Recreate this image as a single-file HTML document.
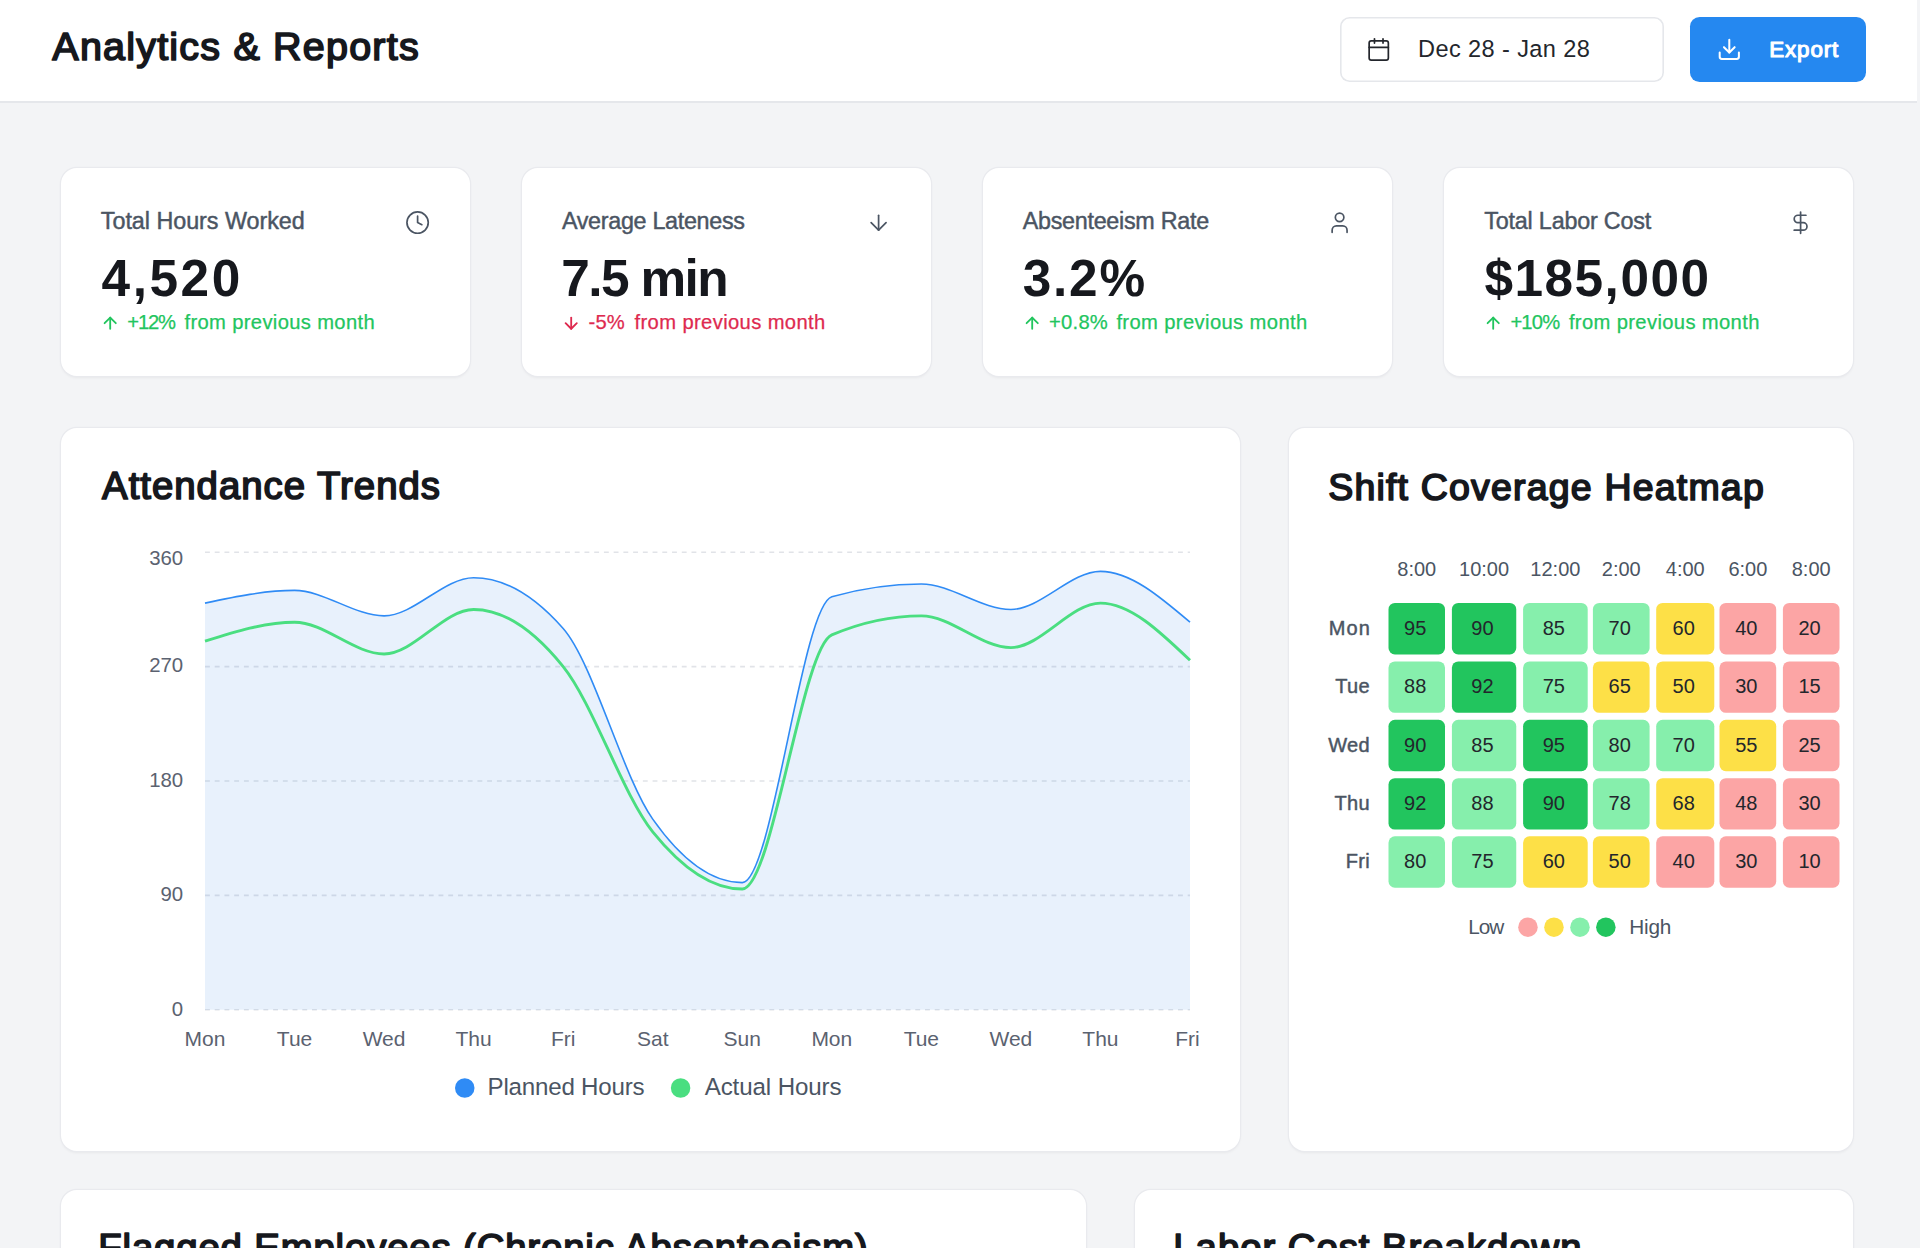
<!DOCTYPE html>
<html><head><meta charset="utf-8"><title>Analytics &amp; Reports</title>
<style>
html,body{margin:0;padding:0;}
body{width:1920px;height:1248px;overflow:hidden;background:#f3f4f6;position:relative;font-family:"Liberation Sans",sans-serif;}
.hdr{position:absolute;left:0;top:0;width:1917.4px;height:101.4px;background:#fff;}
.hdrb{position:absolute;left:0;top:101.4px;width:1917.4px;height:1.6px;background:#e5e7eb;}
.card{position:absolute;background:#fff;border-radius:16px;box-shadow:0 0 0 1.2px #e9eaee,0 1.6px 3px rgba(0,0,0,0.05);}
.btn{position:absolute;border-radius:9.6px;}
svg.ov{position:absolute;left:0;top:0;}
svg text{font-family:"Liberation Sans",sans-serif;}
</style></head><body>
<div class="hdr"></div><div class="hdrb"></div>
<div class="btn" style="left:1340.2px;top:17px;width:324.2px;height:64.6px;background:#fff;box-shadow:inset 0 0 0 1.6px #e5e7eb;"></div>
<div class="btn" style="left:1690.3px;top:16.6px;width:175.6px;height:65px;background:#2588f0;"></div>
<div class="card" style="left:60.6px;top:167.5px;width:409.8px;height:208.4px"></div><div class="card" style="left:521.6px;top:167.5px;width:409.8px;height:208.4px"></div><div class="card" style="left:982.6px;top:167.5px;width:409.8px;height:208.4px"></div><div class="card" style="left:1443.6px;top:167.5px;width:409.8px;height:208.4px"></div><div class="card" style="left:60.6px;top:427.5px;width:1179px;height:723.8px"></div><div class="card" style="left:1289px;top:427.5px;width:564.4px;height:723.8px"></div><div class="card" style="left:60.6px;top:1189.5px;width:1025px;height:200px"></div><div class="card" style="left:1135px;top:1189.5px;width:718.4px;height:200px"></div>
<svg class="ov" width="1920" height="1248" viewBox="0 0 1920 1248">
<line x1="205.0" y1="1009.70" x2="1190.0" y2="1009.70" stroke="#e1e3e8" stroke-width="1.62" stroke-dasharray="4.865 4.865"/>
<line x1="205.0" y1="895.35" x2="1190.0" y2="895.35" stroke="#e1e3e8" stroke-width="1.62" stroke-dasharray="4.865 4.865"/>
<line x1="205.0" y1="781.00" x2="1190.0" y2="781.00" stroke="#e1e3e8" stroke-width="1.62" stroke-dasharray="4.865 4.865"/>
<line x1="205.0" y1="666.65" x2="1190.0" y2="666.65" stroke="#e1e3e8" stroke-width="1.62" stroke-dasharray="4.865 4.865"/>
<line x1="205.0" y1="552.30" x2="1190.0" y2="552.30" stroke="#e1e3e8" stroke-width="1.62" stroke-dasharray="4.865 4.865"/>
<path d="M205.00,603.12C234.85,596.77,264.70,590.42,294.55,590.42C324.39,590.42,354.24,615.83,384.09,615.83C413.94,615.83,443.79,577.71,473.64,577.71C503.48,577.71,533.33,594.65,563.18,628.53C593.03,662.41,622.88,776.76,652.73,819.12C682.58,861.47,712.42,882.64,742.27,882.64C772.12,882.64,801.97,605.24,831.82,596.77C861.67,588.30,891.52,584.06,921.36,584.06C951.21,584.06,981.06,609.47,1010.91,609.47C1040.76,609.47,1070.61,571.36,1100.45,571.36C1130.30,571.36,1160.15,596.77,1190.00,622.18L1190.00,1009.70L205.00,1009.70Z" fill="#1f77e3" fill-opacity="0.1" stroke="none"/>
<path d="M205.00,603.12C234.85,596.77,264.70,590.42,294.55,590.42C324.39,590.42,354.24,615.83,384.09,615.83C413.94,615.83,443.79,577.71,473.64,577.71C503.48,577.71,533.33,594.65,563.18,628.53C593.03,662.41,622.88,776.76,652.73,819.12C682.58,861.47,712.42,882.64,742.27,882.64C772.12,882.64,801.97,605.24,831.82,596.77C861.67,588.30,891.52,584.06,921.36,584.06C951.21,584.06,981.06,609.47,1010.91,609.47C1040.76,609.47,1070.61,571.36,1100.45,571.36C1130.30,571.36,1160.15,596.77,1190.00,622.18" fill="none" stroke="#2f8bf5" stroke-width="1.6"/>
<path d="M205.00,641.24C234.85,631.71,264.70,622.18,294.55,622.18C324.39,622.18,354.24,653.94,384.09,653.94C413.94,653.94,443.79,609.47,473.64,609.47C503.48,609.47,533.33,629.59,563.18,666.65C593.03,703.71,622.88,794.76,652.73,831.82C682.58,868.88,712.42,889.00,742.27,889.00C772.12,889.00,801.97,647.59,831.82,634.89C861.67,622.18,891.52,615.83,921.36,615.83C951.21,615.83,981.06,647.59,1010.91,647.59C1040.76,647.59,1070.61,603.12,1100.45,603.12C1130.30,603.12,1160.15,631.71,1190.00,660.30" fill="none" stroke="#4ade80" stroke-width="2.9"/>
<circle cx="464.75" cy="1088" r="9.75" fill="#2f8bf5"/>
<circle cx="680.6" cy="1088" r="9.75" fill="#4ade80"/>
<rect x="1388.5" y="603.0" width="56.50" height="51.4" rx="6.4" fill="#22c55e"/>
<rect x="1451.9" y="603.0" width="64.35" height="51.4" rx="6.4" fill="#22c55e"/>
<rect x="1523.1" y="603.0" width="64.60" height="51.4" rx="6.4" fill="#86efac"/>
<rect x="1592.9" y="603.0" width="56.70" height="51.4" rx="6.4" fill="#86efac"/>
<rect x="1656.2" y="603.0" width="58.10" height="51.4" rx="6.4" fill="#fde047"/>
<rect x="1719.5" y="603.0" width="56.70" height="51.4" rx="6.4" fill="#fca5a5"/>
<rect x="1782.9" y="603.0" width="56.60" height="51.4" rx="6.4" fill="#fca5a5"/>
<rect x="1388.5" y="661.4" width="56.50" height="51.4" rx="6.4" fill="#86efac"/>
<rect x="1451.9" y="661.4" width="64.35" height="51.4" rx="6.4" fill="#22c55e"/>
<rect x="1523.1" y="661.4" width="64.60" height="51.4" rx="6.4" fill="#86efac"/>
<rect x="1592.9" y="661.4" width="56.70" height="51.4" rx="6.4" fill="#fde047"/>
<rect x="1656.2" y="661.4" width="58.10" height="51.4" rx="6.4" fill="#fde047"/>
<rect x="1719.5" y="661.4" width="56.70" height="51.4" rx="6.4" fill="#fca5a5"/>
<rect x="1782.9" y="661.4" width="56.60" height="51.4" rx="6.4" fill="#fca5a5"/>
<rect x="1388.5" y="719.8" width="56.50" height="51.4" rx="6.4" fill="#22c55e"/>
<rect x="1451.9" y="719.8" width="64.35" height="51.4" rx="6.4" fill="#86efac"/>
<rect x="1523.1" y="719.8" width="64.60" height="51.4" rx="6.4" fill="#22c55e"/>
<rect x="1592.9" y="719.8" width="56.70" height="51.4" rx="6.4" fill="#86efac"/>
<rect x="1656.2" y="719.8" width="58.10" height="51.4" rx="6.4" fill="#86efac"/>
<rect x="1719.5" y="719.8" width="56.70" height="51.4" rx="6.4" fill="#fde047"/>
<rect x="1782.9" y="719.8" width="56.60" height="51.4" rx="6.4" fill="#fca5a5"/>
<rect x="1388.5" y="778.2" width="56.50" height="51.4" rx="6.4" fill="#22c55e"/>
<rect x="1451.9" y="778.2" width="64.35" height="51.4" rx="6.4" fill="#86efac"/>
<rect x="1523.1" y="778.2" width="64.60" height="51.4" rx="6.4" fill="#22c55e"/>
<rect x="1592.9" y="778.2" width="56.70" height="51.4" rx="6.4" fill="#86efac"/>
<rect x="1656.2" y="778.2" width="58.10" height="51.4" rx="6.4" fill="#fde047"/>
<rect x="1719.5" y="778.2" width="56.70" height="51.4" rx="6.4" fill="#fca5a5"/>
<rect x="1782.9" y="778.2" width="56.60" height="51.4" rx="6.4" fill="#fca5a5"/>
<rect x="1388.5" y="836.3" width="56.50" height="51.4" rx="6.4" fill="#86efac"/>
<rect x="1451.9" y="836.3" width="64.35" height="51.4" rx="6.4" fill="#86efac"/>
<rect x="1523.1" y="836.3" width="64.60" height="51.4" rx="6.4" fill="#fde047"/>
<rect x="1592.9" y="836.3" width="56.70" height="51.4" rx="6.4" fill="#fde047"/>
<rect x="1656.2" y="836.3" width="58.10" height="51.4" rx="6.4" fill="#fca5a5"/>
<rect x="1719.5" y="836.3" width="56.70" height="51.4" rx="6.4" fill="#fca5a5"/>
<rect x="1782.9" y="836.3" width="56.60" height="51.4" rx="6.4" fill="#fca5a5"/>
<circle cx="1527.95" cy="927.15" r="9.75" fill="#fca5a5"/>
<circle cx="1553.95" cy="927.15" r="9.75" fill="#fde047"/>
<circle cx="1579.95" cy="927.15" r="9.75" fill="#86efac"/>
<circle cx="1605.85" cy="927.15" r="9.75" fill="#22c55e"/>
<text x="52.35" y="59.51" font-size="39.53" font-weight="400" fill="#16181d" text-anchor="start" letter-spacing="1.195" stroke="#16181d" stroke-width="1.7" stroke-linejoin="round">Analytics &amp; Reports</text>
<text x="1418.1" y="56.90" font-size="23.55" font-weight="400" fill="#23262c" text-anchor="start" letter-spacing="0.39">Dec 28 - Jan 28</text>
<text x="1769.35" y="56.65" font-size="22.38" font-weight="400" fill="#ffffff" text-anchor="start" letter-spacing="0.83" stroke="#ffffff" stroke-width="1.1" stroke-linejoin="round">Export</text>
<text x="100.82" y="228.78" font-size="23.33" font-weight="400" fill="#4b5563" text-anchor="start" letter-spacing="-0.029" stroke="#4b5563" stroke-width="0.45" stroke-linejoin="round">Total Hours Worked</text>
<text x="561.93" y="228.78" font-size="23.33" font-weight="400" fill="#4b5563" text-anchor="start" letter-spacing="-0.308" stroke="#4b5563" stroke-width="0.45" stroke-linejoin="round">Average Lateness</text>
<text x="1022.73" y="228.78" font-size="23.33" font-weight="400" fill="#4b5563" text-anchor="start" letter-spacing="-0.279" stroke="#4b5563" stroke-width="0.45" stroke-linejoin="round">Absenteeism Rate</text>
<text x="1484.22" y="228.78" font-size="23.33" font-weight="400" fill="#4b5563" text-anchor="start" letter-spacing="-0.189" stroke="#4b5563" stroke-width="0.45" stroke-linejoin="round">Total Labor Cost</text>
<text x="101.5" y="295.60" font-size="51.36" font-weight="700" fill="#16181d" text-anchor="start" letter-spacing="2.572">4,520</text>
<text x="561.3" y="295.60" font-size="51.36" font-weight="700" fill="#16181d" text-anchor="start" letter-spacing="-1.609">7.5 min</text>
<text x="1022.75" y="295.60" font-size="51.36" font-weight="700" fill="#16181d" text-anchor="start" letter-spacing="1.751">3.2%</text>
<text x="1484.4" y="295.60" font-size="51.36" font-weight="700" fill="#16181d" text-anchor="start" letter-spacing="1.493">$185,000</text>
<text x="127.22" y="329.27" font-size="20.2" font-weight="400" fill="#22c55e" text-anchor="start" letter-spacing="-1.115" stroke="#22c55e" stroke-width="0.25" stroke-linejoin="round">+12%</text>
<text x="184.53" y="329.27" font-size="20.2" font-weight="400" fill="#22c55e" text-anchor="start" letter-spacing="0.343" stroke="#22c55e" stroke-width="0.25" stroke-linejoin="round">from previous month</text>
<text x="588.42" y="329.27" font-size="20.2" font-weight="400" fill="#de2a4f" text-anchor="start" letter-spacing="0.25" stroke="#de2a4f" stroke-width="0.25" stroke-linejoin="round">-5%</text>
<text x="634.52" y="329.27" font-size="20.2" font-weight="400" fill="#de2a4f" text-anchor="start" letter-spacing="0.376" stroke="#de2a4f" stroke-width="0.25" stroke-linejoin="round">from previous month</text>
<text x="1049.12" y="329.27" font-size="20.2" font-weight="400" fill="#22c55e" text-anchor="start" letter-spacing="0.224" stroke="#22c55e" stroke-width="0.25" stroke-linejoin="round">+0.8%</text>
<text x="1116.38" y="329.27" font-size="20.2" font-weight="400" fill="#22c55e" text-anchor="start" letter-spacing="0.379" stroke="#22c55e" stroke-width="0.25" stroke-linejoin="round">from previous month</text>
<text x="1510.42" y="329.27" font-size="20.2" font-weight="400" fill="#22c55e" text-anchor="start" letter-spacing="-0.831" stroke="#22c55e" stroke-width="0.25" stroke-linejoin="round">+10%</text>
<text x="1568.88" y="329.27" font-size="20.2" font-weight="400" fill="#22c55e" text-anchor="start" letter-spacing="0.362" stroke="#22c55e" stroke-width="0.25" stroke-linejoin="round">from previous month</text>
<text x="102.05" y="499.25" font-size="38.37" font-weight="400" fill="#16181d" text-anchor="start" letter-spacing="0.999" stroke="#16181d" stroke-width="1.7" stroke-linejoin="round">Attendance Trends</text>
<text x="183.2" y="565.25" font-size="20.4" font-weight="400" fill="#5b6270" text-anchor="end">360</text>
<text x="183.2" y="672.40" font-size="20.4" font-weight="400" fill="#5b6270" text-anchor="end">270</text>
<text x="183.2" y="787.40" font-size="20.4" font-weight="400" fill="#5b6270" text-anchor="end">180</text>
<text x="183.2" y="900.90" font-size="20.4" font-weight="400" fill="#5b6270" text-anchor="end">90</text>
<text x="183.2" y="1016.25" font-size="20.4" font-weight="400" fill="#5b6270" text-anchor="end">0</text>
<text x="205.0" y="1045.60" font-size="21.0" font-weight="400" fill="#5b6270" text-anchor="middle">Mon</text>
<text x="294.54545454545456" y="1045.60" font-size="21.0" font-weight="400" fill="#5b6270" text-anchor="middle">Tue</text>
<text x="384.0909090909091" y="1045.60" font-size="21.0" font-weight="400" fill="#5b6270" text-anchor="middle">Wed</text>
<text x="473.6363636363636" y="1045.60" font-size="21.0" font-weight="400" fill="#5b6270" text-anchor="middle">Thu</text>
<text x="563.1818181818182" y="1045.60" font-size="21.0" font-weight="400" fill="#5b6270" text-anchor="middle">Fri</text>
<text x="652.7272727272727" y="1045.60" font-size="21.0" font-weight="400" fill="#5b6270" text-anchor="middle">Sat</text>
<text x="742.2727272727273" y="1045.60" font-size="21.0" font-weight="400" fill="#5b6270" text-anchor="middle">Sun</text>
<text x="831.8181818181819" y="1045.60" font-size="21.0" font-weight="400" fill="#5b6270" text-anchor="middle">Mon</text>
<text x="921.3636363636364" y="1045.60" font-size="21.0" font-weight="400" fill="#5b6270" text-anchor="middle">Tue</text>
<text x="1010.9090909090909" y="1045.60" font-size="21.0" font-weight="400" fill="#5b6270" text-anchor="middle">Wed</text>
<text x="1100.4545454545455" y="1045.60" font-size="21.0" font-weight="400" fill="#5b6270" text-anchor="middle">Thu</text>
<text x="1187.4" y="1045.60" font-size="21.0" font-weight="400" fill="#5b6270" text-anchor="middle">Fri</text>
<text x="487.6" y="1094.60" font-size="24.13" font-weight="400" fill="#4b5563" text-anchor="start" letter-spacing="-0.219">Planned Hours</text>
<text x="704.7" y="1094.60" font-size="24.13" font-weight="400" fill="#4b5563" text-anchor="start" letter-spacing="-0.113">Actual Hours</text>
<text x="1328.25" y="499.75" font-size="37.5" font-weight="400" fill="#16181d" text-anchor="start" letter-spacing="1.184" stroke="#16181d" stroke-width="1.7" stroke-linejoin="round">Shift Coverage Heatmap</text>
<text x="1416.75" y="576.20" font-size="20.0" font-weight="400" fill="#4b5563" text-anchor="middle">8:00</text>
<text x="1484.075" y="576.20" font-size="20.0" font-weight="400" fill="#4b5563" text-anchor="middle">10:00</text>
<text x="1555.4" y="576.20" font-size="20.0" font-weight="400" fill="#4b5563" text-anchor="middle">12:00</text>
<text x="1621.25" y="576.20" font-size="20.0" font-weight="400" fill="#4b5563" text-anchor="middle">2:00</text>
<text x="1685.25" y="576.20" font-size="20.0" font-weight="400" fill="#4b5563" text-anchor="middle">4:00</text>
<text x="1747.85" y="576.20" font-size="20.0" font-weight="400" fill="#4b5563" text-anchor="middle">6:00</text>
<text x="1811.2" y="576.20" font-size="20.0" font-weight="400" fill="#4b5563" text-anchor="middle">8:00</text>
<text x="1328.72" y="634.77" font-size="19.99" font-weight="400" fill="#4b5563" text-anchor="start" letter-spacing="1.144" stroke="#4b5563" stroke-width="0.45" stroke-linejoin="round">Mon</text>
<text x="1369.9" y="693.17" font-size="20.0" font-weight="400" fill="#4b5563" text-anchor="end" letter-spacing="0.3" stroke="#4b5563" stroke-width="0.45" stroke-linejoin="round">Tue</text>
<text x="1369.9" y="751.57" font-size="20.0" font-weight="400" fill="#4b5563" text-anchor="end" letter-spacing="0.3" stroke="#4b5563" stroke-width="0.45" stroke-linejoin="round">Wed</text>
<text x="1369.9" y="809.98" font-size="20.0" font-weight="400" fill="#4b5563" text-anchor="end" letter-spacing="0.3" stroke="#4b5563" stroke-width="0.45" stroke-linejoin="round">Thu</text>
<text x="1369.9" y="868.07" font-size="20.0" font-weight="400" fill="#4b5563" text-anchor="end" letter-spacing="0.3" stroke="#4b5563" stroke-width="0.45" stroke-linejoin="round">Fri</text>
<text x="1415.15" y="634.80" font-size="20.0" font-weight="400" fill="#23262c" text-anchor="middle">95</text>
<text x="1482.4750000000001" y="634.80" font-size="20.0" font-weight="400" fill="#23262c" text-anchor="middle">90</text>
<text x="1553.8000000000002" y="634.80" font-size="20.0" font-weight="400" fill="#23262c" text-anchor="middle">85</text>
<text x="1619.65" y="634.80" font-size="20.0" font-weight="400" fill="#23262c" text-anchor="middle">70</text>
<text x="1683.65" y="634.80" font-size="20.0" font-weight="400" fill="#23262c" text-anchor="middle">60</text>
<text x="1746.25" y="634.80" font-size="20.0" font-weight="400" fill="#23262c" text-anchor="middle">40</text>
<text x="1809.6000000000001" y="634.80" font-size="20.0" font-weight="400" fill="#23262c" text-anchor="middle">20</text>
<text x="1415.15" y="693.20" font-size="20.0" font-weight="400" fill="#23262c" text-anchor="middle">88</text>
<text x="1482.4750000000001" y="693.20" font-size="20.0" font-weight="400" fill="#23262c" text-anchor="middle">92</text>
<text x="1553.8000000000002" y="693.20" font-size="20.0" font-weight="400" fill="#23262c" text-anchor="middle">75</text>
<text x="1619.65" y="693.20" font-size="20.0" font-weight="400" fill="#23262c" text-anchor="middle">65</text>
<text x="1683.65" y="693.20" font-size="20.0" font-weight="400" fill="#23262c" text-anchor="middle">50</text>
<text x="1746.25" y="693.20" font-size="20.0" font-weight="400" fill="#23262c" text-anchor="middle">30</text>
<text x="1809.6000000000001" y="693.20" font-size="20.0" font-weight="400" fill="#23262c" text-anchor="middle">15</text>
<text x="1415.15" y="751.60" font-size="20.0" font-weight="400" fill="#23262c" text-anchor="middle">90</text>
<text x="1482.4750000000001" y="751.60" font-size="20.0" font-weight="400" fill="#23262c" text-anchor="middle">85</text>
<text x="1553.8000000000002" y="751.60" font-size="20.0" font-weight="400" fill="#23262c" text-anchor="middle">95</text>
<text x="1619.65" y="751.60" font-size="20.0" font-weight="400" fill="#23262c" text-anchor="middle">80</text>
<text x="1683.65" y="751.60" font-size="20.0" font-weight="400" fill="#23262c" text-anchor="middle">70</text>
<text x="1746.25" y="751.60" font-size="20.0" font-weight="400" fill="#23262c" text-anchor="middle">55</text>
<text x="1809.6000000000001" y="751.60" font-size="20.0" font-weight="400" fill="#23262c" text-anchor="middle">25</text>
<text x="1415.15" y="810.00" font-size="20.0" font-weight="400" fill="#23262c" text-anchor="middle">92</text>
<text x="1482.4750000000001" y="810.00" font-size="20.0" font-weight="400" fill="#23262c" text-anchor="middle">88</text>
<text x="1553.8000000000002" y="810.00" font-size="20.0" font-weight="400" fill="#23262c" text-anchor="middle">90</text>
<text x="1619.65" y="810.00" font-size="20.0" font-weight="400" fill="#23262c" text-anchor="middle">78</text>
<text x="1683.65" y="810.00" font-size="20.0" font-weight="400" fill="#23262c" text-anchor="middle">68</text>
<text x="1746.25" y="810.00" font-size="20.0" font-weight="400" fill="#23262c" text-anchor="middle">48</text>
<text x="1809.6000000000001" y="810.00" font-size="20.0" font-weight="400" fill="#23262c" text-anchor="middle">30</text>
<text x="1415.15" y="868.10" font-size="20.0" font-weight="400" fill="#23262c" text-anchor="middle">80</text>
<text x="1482.4750000000001" y="868.10" font-size="20.0" font-weight="400" fill="#23262c" text-anchor="middle">75</text>
<text x="1553.8000000000002" y="868.10" font-size="20.0" font-weight="400" fill="#23262c" text-anchor="middle">60</text>
<text x="1619.65" y="868.10" font-size="20.0" font-weight="400" fill="#23262c" text-anchor="middle">50</text>
<text x="1683.65" y="868.10" font-size="20.0" font-weight="400" fill="#23262c" text-anchor="middle">40</text>
<text x="1746.25" y="868.10" font-size="20.0" font-weight="400" fill="#23262c" text-anchor="middle">30</text>
<text x="1809.6000000000001" y="868.10" font-size="20.0" font-weight="400" fill="#23262c" text-anchor="middle">10</text>
<text x="1468.2" y="933.60" font-size="20.78" font-weight="400" fill="#4b5563" text-anchor="start" letter-spacing="-0.999">Low</text>
<text x="1629.2" y="933.60" font-size="20.78" font-weight="400" fill="#4b5563" text-anchor="start" letter-spacing="-0.186">High</text>
<text x="98.25" y="1260.55" font-size="38.37" font-weight="400" fill="#16181d" text-anchor="start" letter-spacing="0.838" stroke="#16181d" stroke-width="1.7" stroke-linejoin="round">Flagged Employees (Chronic Absenteeism)</text>
<text x="1173.35" y="1260.95" font-size="38.3" font-weight="400" fill="#16181d" text-anchor="start" letter-spacing="0.975" stroke="#16181d" stroke-width="1.7" stroke-linejoin="round">Labor Cost Breakdown</text>
<svg x="1365.95" y="36.70" width="25.6" height="25.6" viewBox="0 0 24 24" fill="none" stroke="#23262c" stroke-width="1.6" stroke-linecap="round" stroke-linejoin="round"><rect width="18" height="18" x="3" y="4" rx="2" ry="2"/><line x1="16" x2="16" y1="2" y2="6"/><line x1="8" x2="8" y1="2" y2="6"/><line x1="3" x2="21" y1="10" y2="10"/></svg>
<svg x="1716.50" y="36.50" width="25.6" height="25.6" viewBox="0 0 24 24" fill="none" stroke="#ffffff" stroke-width="1.9" stroke-linecap="round" stroke-linejoin="round"><path d="M21 15v4a2 2 0 0 1-2 2H5a2 2 0 0 1-2-2v-4"/><polyline points="7 10 12 15 17 10"/><line x1="12" x2="12" y1="15" y2="3"/></svg>
<svg x="404.80" y="209.80" width="25.6" height="25.6" viewBox="0 0 24 24" fill="none" stroke="#4b5563" stroke-width="1.6" stroke-linecap="round" stroke-linejoin="round"><circle cx="12" cy="12" r="10"/><polyline points="12 6 12 12 16 14"/></svg>
<svg x="865.80" y="209.90" width="25.6" height="25.6" viewBox="0 0 24 24" fill="none" stroke="#4b5563" stroke-width="1.6" stroke-linecap="round" stroke-linejoin="round"><path d="M12 5v14"/><path d="m19 12-7 7-7-7"/></svg>
<svg x="1326.80" y="209.90" width="25.6" height="25.6" viewBox="0 0 24 24" fill="none" stroke="#4b5563" stroke-width="1.6" stroke-linecap="round" stroke-linejoin="round"><path d="M19 21v-2a4 4 0 0 0-4-4H9a4 4 0 0 0-4 4v2"/><circle cx="12" cy="7" r="4"/></svg>
<svg x="1787.80" y="209.90" width="25.6" height="25.6" viewBox="0 0 24 24" fill="none" stroke="#4b5563" stroke-width="1.6" stroke-linecap="round" stroke-linejoin="round"><line x1="12" x2="12" y1="2" y2="22"/><path d="M17 5H9.5a3.5 3.5 0 0 0 0 7h5a3.5 3.5 0 0 1 0 7H6"/></svg>
<svg x="100.60" y="313.55" width="19.2" height="19.2" viewBox="0 0 24 24" fill="none" stroke="#22c55e" stroke-width="2.3" stroke-linecap="round" stroke-linejoin="round"><path d="m5 12 7-7 7 7"/><path d="M12 19V5"/></svg>
<svg x="561.60" y="313.55" width="19.2" height="19.2" viewBox="0 0 24 24" fill="none" stroke="#de2a4f" stroke-width="2.3" stroke-linecap="round" stroke-linejoin="round"><path d="M12 5v14"/><path d="m19 12-7 7-7-7"/></svg>
<svg x="1022.60" y="313.55" width="19.2" height="19.2" viewBox="0 0 24 24" fill="none" stroke="#22c55e" stroke-width="2.3" stroke-linecap="round" stroke-linejoin="round"><path d="m5 12 7-7 7 7"/><path d="M12 19V5"/></svg>
<svg x="1483.60" y="313.55" width="19.2" height="19.2" viewBox="0 0 24 24" fill="none" stroke="#22c55e" stroke-width="2.3" stroke-linecap="round" stroke-linejoin="round"><path d="m5 12 7-7 7 7"/><path d="M12 19V5"/></svg>
</svg>
</body></html>
